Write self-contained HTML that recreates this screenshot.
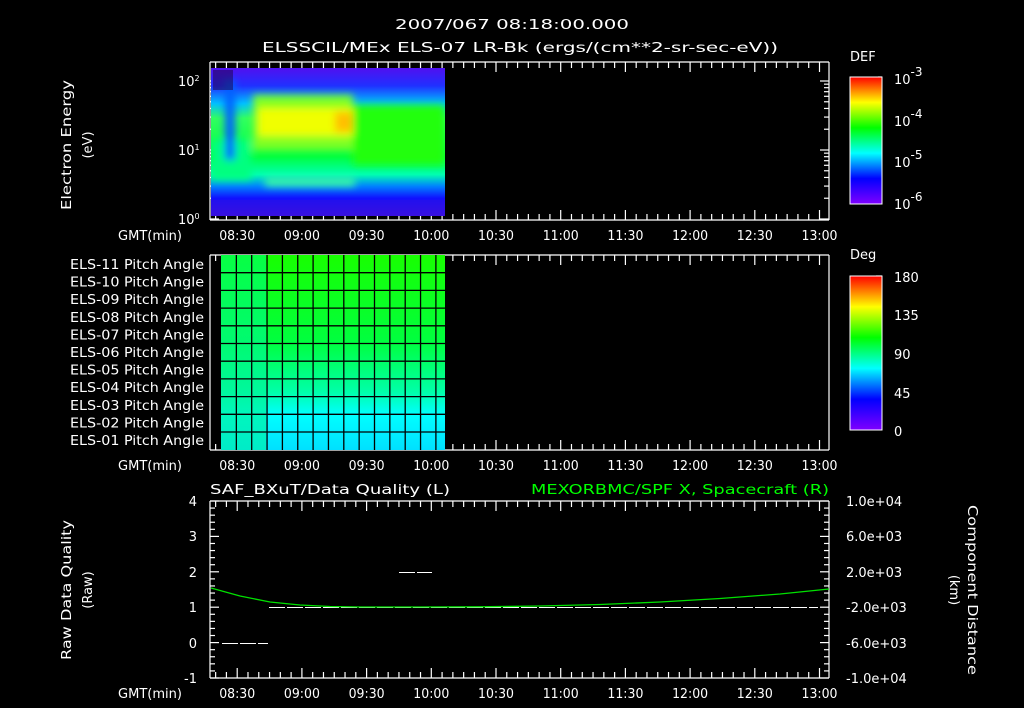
<!DOCTYPE html>
<html><head><meta charset="utf-8"><style>
html,body{margin:0;padding:0;background:#000;}
svg{display:block;}
text{font-family:"DejaVu Sans","Liberation Sans",sans-serif;fill:#fff;font-size:13px;}
</style></head><body>
<svg id="s" width="1024" height="708" viewBox="0 0 1024 708" xmlns="http://www.w3.org/2000/svg">
<defs>
<linearGradient id="cb" x1="0" y1="1" x2="0" y2="0">
<stop offset="0" stop-color="#7f00ff"/><stop offset="0.2" stop-color="#0000ff"/><stop offset="0.4" stop-color="#00ffff"/><stop offset="0.6" stop-color="#00ff00"/><stop offset="0.8" stop-color="#ffff00"/><stop offset="1" stop-color="#ff0000"/>
</linearGradient>
<linearGradient id="spec" x1="0" y1="0" x2="0" y2="1">
<stop offset="0" stop-color="#5010f0"/><stop offset="0.12" stop-color="#2030ff"/><stop offset="0.24" stop-color="#00c0ff"/><stop offset="0.34" stop-color="#30ff60"/><stop offset="0.6" stop-color="#00ff40"/><stop offset="0.72" stop-color="#00ffb0"/><stop offset="0.8" stop-color="#0080ff"/><stop offset="0.88" stop-color="#1010ff"/><stop offset="1" stop-color="#4010e0"/>
</linearGradient>
<linearGradient id="pa" x1="0" y1="0" x2="0" y2="1">
<stop offset="0" stop-color="#18ff00"/><stop offset="0.45" stop-color="#00ff40"/><stop offset="0.7" stop-color="#00ffa8"/><stop offset="0.82" stop-color="#00ffff"/><stop offset="1" stop-color="#00e0ff"/>
</linearGradient>
<linearGradient id="pa2" x1="0" y1="0" x2="0" y2="1">
<stop offset="0" stop-color="#00ff60"/><stop offset="1" stop-color="#00f0b0"/>
</linearGradient>
<filter id="bl"><feGaussianBlur stdDeviation="4"/></filter>
<clipPath id="cp"><rect x="211" y="68" width="234" height="148"/></clipPath>
</defs>
<g id="g"></g>
<text x="512" y="29" text-anchor="middle" font-size="16" textLength="234" lengthAdjust="spacingAndGlyphs">2007/067 08:18:00.000</text>
<text x="262" y="52" font-size="16" textLength="516" lengthAdjust="spacingAndGlyphs">ELSSCIL/MEx ELS-07 LR-Bk  (ergs/(cm**2-sr-sec-eV))</text>
<g clip-path="url(#cp)">
<rect x="211" y="68" width="234" height="148" fill="url(#spec)"/>
<g filter="url(#bl)">
<rect x="253" y="95" width="100" height="55" fill="#80ff20"/>
<rect x="258" y="108" width="95" height="28" fill="#f0ff00"/>
<rect x="335" y="112" width="18" height="20" fill="#ffc000"/>
<rect x="353" y="105" width="92" height="60" fill="#20ff10"/>
<rect x="211" y="140" width="40" height="40" fill="#00ff80"/>
<rect x="225" y="80" width="10" height="80" fill="#0060ff"/>
<rect x="265" y="178" width="90" height="8" fill="#40ffa0"/>
</g>
<rect x="213" y="70" width="20" height="20" fill="#200040" opacity="0.5"/>
<rect x="211" y="200" width="234" height="16" fill="#3010e0" opacity="0.5"/>
</g>
<rect x="221" y="255" width="224" height="195" fill="url(#pa)"/>
<rect x="221" y="255" width="45" height="195" fill="url(#pa2)" opacity="0.7"/>
<g id="grid" stroke="#000" stroke-width="1.3"></g>
<rect x="850" y="77" width="32" height="127" fill="url(#cb)" stroke="#fff"/>
<rect x="850" y="276" width="32" height="154" fill="url(#cb)" stroke="#fff"/>
<text x="850" y="61" font-size="16">DEF</text>
<text x="850" y="259" font-size="16">Deg</text>
<g font-size="17">
<text x="894" y="84">10<tspan dy="-8" font-size="12">-3</tspan></text>
<text x="894" y="126">10<tspan dy="-8" font-size="12">-4</tspan></text>
<text x="894" y="167">10<tspan dy="-8" font-size="12">-5</tspan></text>
<text x="894" y="209">10<tspan dy="-8" font-size="12">-6</tspan></text>
<text x="894" y="282">180</text><text x="894" y="320">135</text><text x="894" y="359">90</text><text x="894" y="398">45</text><text x="894" y="436">0</text>
</g>
<text x="178" y="86" font-size="12">10<tspan dy="-5" font-size="8">2</tspan></text>
<text x="178" y="155" font-size="12">10<tspan dy="-5" font-size="8">1</tspan></text>
<text x="178" y="224" font-size="12">10<tspan dy="-5" font-size="8">0</tspan></text>
<text transform="translate(71,145) rotate(-90)" text-anchor="middle" font-size="14" textLength="130" lengthAdjust="spacingAndGlyphs">Electron Energy</text>
<text transform="translate(92,145) rotate(-90)" text-anchor="middle" font-size="14">(eV)</text>
<g id="pl" font-size="12"></g>
<text x="210" y="494" font-size="15" textLength="240" lengthAdjust="spacingAndGlyphs">SAF_BXuT/Data Quality (L)</text>
<text x="531" y="494" font-size="15" textLength="298" lengthAdjust="spacingAndGlyphs" style="fill:#00ff00">MEXORBMC/SPF X, Spacecraft (R)</text>
<g font-size="14" text-anchor="end">
<text x="197" y="506">4</text><text x="197" y="541">3</text><text x="197" y="577">2</text><text x="197" y="612">1</text><text x="197" y="648">0</text><text x="197" y="683">-1</text>
</g>
<g font-size="13">
<text x="846" y="506">1.0e+04</text><text x="846" y="541">6.0e+03</text><text x="846" y="577">2.0e+03</text><text x="846" y="612">-2.0e+03</text><text x="846" y="648">-6.0e+03</text><text x="846" y="683">-1.0e+04</text>
</g>
<text transform="translate(71,590) rotate(-90)" text-anchor="middle" font-size="14" textLength="140" lengthAdjust="spacingAndGlyphs">Raw Data Quality</text>
<text transform="translate(92,590) rotate(-90)" text-anchor="middle" font-size="14">(Raw)</text>
<text transform="translate(968,590) rotate(90)" text-anchor="middle" font-size="14" textLength="170" lengthAdjust="spacingAndGlyphs">Component Distance</text>
<text transform="translate(950,590) rotate(90)" text-anchor="middle" font-size="14">(km)</text>
<g stroke="#fff" stroke-width="1" stroke-dasharray="16,2" shape-rendering="crispEdges">
<line x1="222" y1="643.5" x2="268" y2="643.5"/>
<line x1="269" y1="607.5" x2="818" y2="607.5"/>
<line x1="399" y1="572.5" x2="432" y2="572.5"/>
</g>
<polyline fill="none" stroke="#00e000" stroke-width="1.3" points="211,588 240,596 270,602 300,605 330,606.5 360,607 420,607 480,606.8 540,606 600,604.5 660,602 720,598.5 780,594 829,589"/>
</svg>
<script>
const ns="http://www.w3.org/2000/svg",g=document.getElementById('g');
function L(x1,y1,x2,y2){const l=document.createElementNS(ns,'line');l.setAttribute('x1',x1);l.setAttribute('y1',y1);l.setAttribute('x2',x2);l.setAttribute('y2',y2);l.setAttribute('stroke','#fff');l.setAttribute('stroke-width','1.2');g.appendChild(l);}
function T(p,x,y,s,a,fs,tl){const t=document.createElementNS(ns,'text');t.setAttribute('x',x);t.setAttribute('y',y);if(a)t.setAttribute('text-anchor',a);if(fs)t.setAttribute('font-size',fs);if(tl){t.setAttribute('textLength',tl);t.setAttribute('lengthAdjust','spacingAndGlyphs');}t.textContent=s;p.appendChild(t);}
const svg=document.getElementById('s');
const x0=237.2,px=64.7/30;
const labs=["08:30","09:00","09:30","10:00","10:30","11:00","11:30","12:00","12:30","13:00"];
[[62,220],[255,450],[501,678]].forEach(([t,b])=>{
 L(210,t,829,t);L(210,b,829,b);L(210,t,210,b);L(829,t,829,b);
 for(let m=-10;m<=275;m+=5){const x=x0+m*px;if(x<211||x>828)continue;const maj=m%30==0;const h=maj?10:6;L(x,t,x,t+h);L(x,b,x,b-h);}
 labs.forEach((s,i)=>T(svg,x0+i*30*px,b+20,s,'middle','13',36));
 T(svg,118,b+20,"GMT(min)",null,'13',64);
});
for(let d=0;d<2;d++)for(let k=1;k<10;k++){const y=219-(d+Math.log10(k))*69;const h=k==1?9:5;L(210,y,210+h,y);L(829,y,829-h,y);}
L(210,81,219,81);L(829,81,820,81);
for(let i=0;i<=25;i++){const y=501+i*177/25;const h=i%5==0?9:5;L(210,y,210+h,y);L(829,y,829-h,y);}
for(let i=0;i<12;i++){const y=77+i*127/12;L(882,y,878,y);}
for(let i=0;i<20;i++){const y=276+i*154/20;L(882,y,876,y);}
const gr=document.getElementById('grid');
function G(x1,y1,x2,y2){const l=document.createElementNS(ns,'line');l.setAttribute('x1',x1);l.setAttribute('y1',y1);l.setAttribute('x2',x2);l.setAttribute('y2',y2);gr.appendChild(l);}
for(let i=1;i<15;i++){const x=221+i*15.35;G(x,255,x,450);}
for(let i=1;i<11;i++){const y=255+i*17.7;G(221,y,445,y);}
const pl=document.getElementById('pl');
for(let i=0;i<11;i++){const n=11-i;T(pl,70,269+i*17.6,"ELS-"+(n<10?"0":"")+n+" Pitch Angle",null,null,134);}
</script>
</body></html>
